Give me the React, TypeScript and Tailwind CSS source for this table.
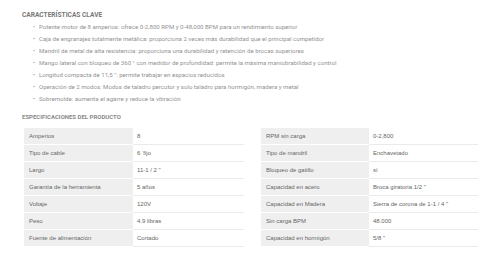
const features = [
  'Potente motor de 8 amperios: ofrece 0-2,800 RPM y 0-48,000 BPM para un rendimiento superior',
  'Caja de engranajes totalmente metálica: proporciona 2 veces más durabilidad que el principal competidor',
  'Mandril de metal de alta resistencia: proporciona una durabilidad y retención de brocas superiores',
  'Mango lateral con bloqueo de 360 ° con medidor de profundidad: permite la máxima maniobrabilidad y control',
  'Longitud compacta de 11,5 ": permite trabajar en espacios reducidos',
  'Operación de 2 modos: Modos de taladro percutor y solo taladro para hormigón, madera y metal',
  'Sobremolde: aumenta el agarre y reduce la vibración',
];

const leftSpecs: [string, string][] = [
  ['Amperios', '8'],
  ['Tipo de cable', '6 ‘fijo'],
  ['Largo', '11-1 / 2 "'],
  ['Garantía de la herramienta', '5 años'],
  ['Voltaje', '120V'],
  ['Peso', '4.9 libras'],
  ['Fuente de alimentación', 'Cortado'],
];

const rightSpecs: [string, string][] = [
  ['RPM sin carga', '0-2,800'],
  ['Tipo de mandril', 'Enchavetado'],
  ['Bloqueo de gatillo', 'sí'],
  ['Capacidad en acero', 'Broca giratoria 1/2 "'],
  ['Capacidad en Madera', 'Sierra de corona de 1-1 / 4 "'],
  ['Sin carga BPM', '48.000'],
  ['Capacidad en hormigón', '5/8 "'],
];

function SpecTable({ rows, width, labelWidth }: { rows: [string, string][]; width: string; labelWidth: string }) {
  return (
    <div className={`${width} flex flex-col`}>
      {rows.map(([k, v]) => (
        <div key={k} className="flex h-[17px]">
          <div className={`${labelWidth} shrink-0 bg-[#efefef] border-b border-white pl-[5px] flex items-center`}>
            {k}
          </div>
          <div className="flex-1 border-b border-[#ebebeb] pl-[4px] flex items-center">{v}</div>
        </div>
      ))}
    </div>
  );
}

export default function App() {
  return (
    <div className="w-[500px] h-[258px] bg-white overflow-hidden pl-[22px] pt-[9px]">
      <div className="text-[6.6px] leading-[12px] font-bold text-[#777] font-['Roboto',sans-serif]">
        CARACTERÍSTICAS CLAVE
      </div>
      <ul className="font-['Roboto',sans-serif] text-[6.1px] leading-[12px] text-[#939393]">
        {features.map(f => (
          <li key={f} className="flex pl-[11px]">
            <span className="w-[6px] shrink-0">•</span>
            <span>{f}</span>
          </li>
        ))}
      </ul>
      <div className="mt-[6px] text-[6px] leading-[12px] font-bold text-[#8a8a8a] font-['Roboto',sans-serif]">
        ESPECIFICACIONES DEL PRODUCTO
      </div>
      <div className="mt-[5px] ml-[2px] flex gap-[17px] font-['Liberation_Sans',Arial,sans-serif] text-[6px] text-[#666]">
        <SpecTable rows={leftSpecs} width="w-[220px]" labelWidth="w-[109px]" />
        <SpecTable rows={rightSpecs} width="w-[217px]" labelWidth="w-[108px]" />
      </div>
    </div>
  );
}
